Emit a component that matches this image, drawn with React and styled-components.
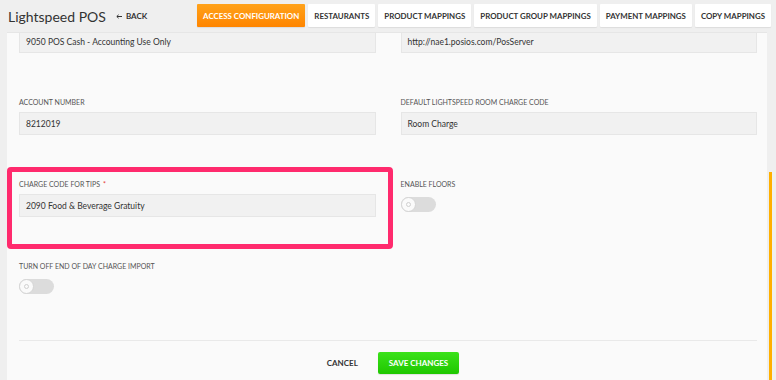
import React from 'react'
import styled, { createGlobalStyle } from 'styled-components'

const GlobalStyle = createGlobalStyle`
	body {
		margin: 0;
		font-family: 'Lato', 'Liberation Sans', sans-serif;
		background: #efefef;
	}
	* { box-sizing: border-box; }
`

const Page = styled.div`
	width: 776px;
	height: 380px;
	overflow: hidden;
	display: flex;
	flex-direction: column;
	background: #efefef;
`

const Header = styled.div`
	height: 32px;
	flex-shrink: 0;
	display: flex;
	align-items: center;
	padding: 0 5px 0 8px;
`

const Title = styled.h1`
	margin: 0;
	font-size: 14px;
	font-weight: 400;
	color: #333;
`

const BackLink = styled.a`
	margin-left: 10px;
	font-size: 8px;
	font-weight: 700;
	color: #333;
	display: flex;
	align-items: center;
	gap: 4px;
`

const Tabs = styled.div`
	margin-left: auto;
	align-self: flex-start;
	margin-top: 4px;
	display: flex;
	gap: 3px;
`

const Tab = styled.div`
	height: 23px;
	padding: 0 6px;
	display: flex;
	align-items: center;
	font-size: 7.9px;
	font-weight: 700;
	color: ${({ $active }) => ($active ? '#fff' : '#333')};
	background: ${({ $active }) => ($active ? 'linear-gradient(#ffa21a, #ff8500)' : '#fff')};
	box-shadow: 0 1px 1px rgba(0, 0, 0, 0.08);
	border-radius: 1px;
`

const Body = styled.div`
	flex: 1;
	min-height: 0;
	display: flex;
`

const Gutter = styled.div`
	width: 7px;
`

const Panel = styled.div`
	flex: 1;
	background: #fafafa;
	border-top: 1px solid #e6e6e6;
	overflow: hidden;
	display: flex;
	flex-direction: column;
`

const Scrollbar = styled.div`
	width: 9px;
	padding-left: 2px;
	padding-top: 140px;
`

const Thumb = styled.div`
	width: 3px;
	height: 100%;
	background: #ffb000;
`

const Grid = styled.div`
	display: grid;
	grid-template-columns: 1fr 1fr;
	column-gap: 25px;
	row-gap: 44px;
	padding: 0 10px 0 12px;
	margin-top: -3px;
`

const Field = styled.div`
	position: relative;
	display: flex;
	flex-direction: column;
	align-items: flex-start;
`

const Label = styled.label`
	font-size: 7px;
	line-height: 10px;
	color: #555;
	margin-bottom: 5px;
	text-transform: uppercase;
`

const Required = styled.span`
	color: #e53935;
	margin-left: 3px;
`

const Input = styled.div`
	align-self: stretch;
	height: 23px;
	padding: 0 6px;
	display: flex;
	align-items: center;
	font-size: 8.5px;
	color: #333;
	background: #f1f1f1;
	border: 1px solid #e6e6e6;
`

const Toggle = styled.div`
	margin-top: 3px;
	width: 35px;
	height: 15px;
	border-radius: 8px;
	background: #dcdcdc;
	display: flex;
	align-items: center;
`

const Knob = styled.div`
	width: 15px;
	height: 15px;
	border-radius: 50%;
	background: #fafafa;
	border: 1px solid #d4d4d4;
	display: flex;
	align-items: center;
	justify-content: center;

	&::after {
		content: '';
		width: 3px;
		height: 3px;
		border-radius: 50%;
		border: 1px solid #d0d0d0;
	}
`

const Highlight = styled.div`
	position: absolute;
	top: -12px;
	left: -12px;
	right: -17px;
	bottom: -32px;
	border: 5px solid #ff2a6d;
	border-radius: 4px;
	pointer-events: none;
`

const Divider = styled.hr`
	margin: 46px 10px 0 12px;
	border: 0;
	border-top: 1px solid #e9e9e9;
`

const Footer = styled.div`
	display: flex;
	justify-content: center;
	gap: 10px;
	padding-top: 11px;
	padding-left: 2px;
`

const Button = styled.button`
	height: 22px;
	padding: 0 ${({ $primary }) => ($primary ? '11px' : '10px')};
	font-family: inherit;
	font-size: 8px;
	font-weight: 700;
	border: 0;
	border-radius: 2px;
	color: ${({ $primary }) => ($primary ? '#fff' : '#333')};
	background: ${({ $primary }) => ($primary ? 'linear-gradient(#3be21a, #1fc700)' : 'transparent')};
	box-shadow: ${({ $primary }) => ($primary ? '0 1px 1px rgba(0,0,0,0.1)' : 'none')};
`

const tabs = ['Access Configuration', 'Restaurants', 'Product Mappings', 'Product Group Mappings', 'Payment Mappings', 'Copy Mappings']

const App = () => {
	return (
		<Page>
			<GlobalStyle />
			<Header>
				<Title>Lightspeed POS</Title>
				<BackLink>
					<svg width="6" height="5" viewBox="0 0 6 5">
						<path d="M6 2.5H1M2.6 0.8L0.8 2.5L2.6 4.2" stroke="#333" strokeWidth="1" fill="none" />
					</svg>
					BACK
				</BackLink>
				<Tabs>
					{tabs.map((t, i) => (
						<Tab key={t} $active={i === 0}>{t.toUpperCase()}</Tab>
					))}
				</Tabs>
			</Header>
			<Body>
				<Gutter />
				<Panel>
					<Grid>
						<Field>
							<Input>9050 POS Cash - Accounting Use Only</Input>
						</Field>
						<Field>
							<Input>http://nae1.posios.com/PosServer</Input>
						</Field>
						<Field>
							<Label>Account Number</Label>
							<Input>8212019</Input>
						</Field>
						<Field>
							<Label>Default Lightspeed Room Charge Code</Label>
							<Input>Room Charge</Input>
						</Field>
						<Field>
							<Label>Charge Code for Tips<Required>*</Required></Label>
							<Input>2090 Food &amp; Beverage Gratuity</Input>
							<Highlight />
						</Field>
						<Field>
							<Label>Enable Floors</Label>
							<Toggle><Knob /></Toggle>
						</Field>
						<Field>
							<Label>Turn off end of day charge import</Label>
							<Toggle><Knob /></Toggle>
						</Field>
					</Grid>
					<Divider />
					<Footer>
						<Button>CANCEL</Button>
						<Button $primary>SAVE CHANGES</Button>
					</Footer>
				</Panel>
				<Scrollbar>
					<Thumb />
				</Scrollbar>
			</Body>
		</Page>
	)
}

export default App
